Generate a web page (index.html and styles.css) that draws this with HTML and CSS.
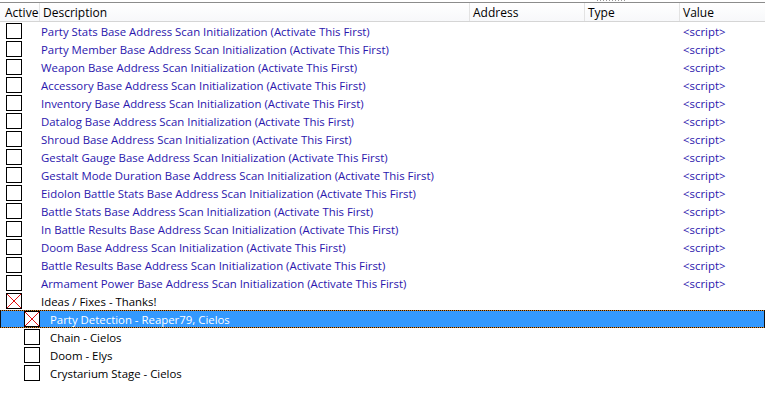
FILE: index.html
```html
<!DOCTYPE html>
<html>
<head>
<meta charset="utf-8">
<link rel="stylesheet" href="styles.css">
</head>
<body>
<div class="top"><span class="grip"></span></div>
<div class="list">
  <div class="head">
    <div class="hc c-active">Active</div>
    <div class="hc c-desc">Description</div>
    <div class="hc c-addr">Address</div>
    <div class="hc c-type">Type</div>
    <div class="hc c-val">Value</div>
  </div>
  <div class="rows">
    <div class="row script"><div class="d"><span class="box"></span><span class="t">Party Stats Base Address Scan Initialization (Activate This First)</span></div><div class="a"></div><div class="ty"></div><div class="v">&lt;script&gt;</div></div>
    <div class="row script"><div class="d"><span class="box"></span><span class="t">Party Member Base Address Scan Initialization (Activate This First)</span></div><div class="a"></div><div class="ty"></div><div class="v">&lt;script&gt;</div></div>
    <div class="row script"><div class="d"><span class="box"></span><span class="t">Weapon Base Address Scan Initialization (Activate This First)</span></div><div class="a"></div><div class="ty"></div><div class="v">&lt;script&gt;</div></div>
    <div class="row script"><div class="d"><span class="box"></span><span class="t">Accessory Base Address Scan Initialization (Activate This First)</span></div><div class="a"></div><div class="ty"></div><div class="v">&lt;script&gt;</div></div>
    <div class="row script"><div class="d"><span class="box"></span><span class="t">Inventory Base Address Scan Initialization (Activate This First)</span></div><div class="a"></div><div class="ty"></div><div class="v">&lt;script&gt;</div></div>
    <div class="row script"><div class="d"><span class="box"></span><span class="t">Datalog Base Address Scan Initialization (Activate This First)</span></div><div class="a"></div><div class="ty"></div><div class="v">&lt;script&gt;</div></div>
    <div class="row script"><div class="d"><span class="box"></span><span class="t">Shroud Base Address Scan Initialization (Activate This First)</span></div><div class="a"></div><div class="ty"></div><div class="v">&lt;script&gt;</div></div>
    <div class="row script"><div class="d"><span class="box"></span><span class="t">Gestalt Gauge Base Address Scan Initialization (Activate This First)</span></div><div class="a"></div><div class="ty"></div><div class="v">&lt;script&gt;</div></div>
    <div class="row script"><div class="d"><span class="box"></span><span class="t">Gestalt Mode Duration Base Address Scan Initialization (Activate This First)</span></div><div class="a"></div><div class="ty"></div><div class="v">&lt;script&gt;</div></div>
    <div class="row script"><div class="d"><span class="box"></span><span class="t">Eidolon Battle Stats Base Address Scan Initialization (Activate This First)</span></div><div class="a"></div><div class="ty"></div><div class="v">&lt;script&gt;</div></div>
    <div class="row script"><div class="d"><span class="box"></span><span class="t">Battle Stats Base Address Scan Initialization (Activate This First)</span></div><div class="a"></div><div class="ty"></div><div class="v">&lt;script&gt;</div></div>
    <div class="row script"><div class="d"><span class="box"></span><span class="t">In Battle Results Base Address Scan Initialization (Activate This First)</span></div><div class="a"></div><div class="ty"></div><div class="v">&lt;script&gt;</div></div>
    <div class="row script"><div class="d"><span class="box"></span><span class="t">Doom Base Address Scan Initialization (Activate This First)</span></div><div class="a"></div><div class="ty"></div><div class="v">&lt;script&gt;</div></div>
    <div class="row script"><div class="d"><span class="box"></span><span class="t">Battle Results Base Address Scan Initialization (Activate This First)</span></div><div class="a"></div><div class="ty"></div><div class="v">&lt;script&gt;</div></div>
    <div class="row script"><div class="d"><span class="box"></span><span class="t">Armament Power Base Address Scan Initialization (Activate This First)</span></div><div class="a"></div><div class="ty"></div><div class="v">&lt;script&gt;</div></div>
    <div class="row"><div class="d"><span class="box x"><svg viewBox="0 0 14 14" width="14" height="14"><path d="M0 0L14 14M14 0L0 14" stroke="#e01010" stroke-width="1"/></svg></span><span class="t">Ideas / Fixes - Thanks!</span></div><div class="a"></div><div class="ty"></div><div class="v"></div></div>
    <div class="row child sel"><div class="d"><span class="box x"><svg viewBox="0 0 14 14" width="14" height="14"><path d="M0 0L14 14M14 0L0 14" stroke="#e01010" stroke-width="1"/></svg></span><span class="t">Party Detection - Reaper79, Cielos</span></div><div class="a"></div><div class="ty"></div><div class="v"></div></div>
    <div class="row child"><div class="d"><span class="box"></span><span class="t">Chain - Cielos</span></div><div class="a"></div><div class="ty"></div><div class="v"></div></div>
    <div class="row child"><div class="d"><span class="box"></span><span class="t">Doom - Elys</span></div><div class="a"></div><div class="ty"></div><div class="v"></div></div>
    <div class="row child"><div class="d"><span class="box"></span><span class="t">Crystarium Stage - Cielos</span></div><div class="a"></div><div class="ty"></div><div class="v"></div></div>
  </div>
</div>
</body>
</html>
```
FILE: styles.css
```css
html, body {
  margin: 0;
  padding: 0;
  background: #fff;
  width: 765px;
  height: 406px;
  overflow: hidden;
}
body {
  font-family: "Open Sans", "Noto Sans", sans-serif;
  font-size: 11.4px;
  color: #000;
}
.top {
  height: 2px;
  border-bottom: 1px solid #8c8c8c;
  display: flex;
  justify-content: flex-start;
  padding-left: 597px;
}
.grip {
  width: 28px;
  height: 1px;
  margin-top: 0;
  background: repeating-linear-gradient(90deg, #9a9a9a 0 1px, transparent 1px 3px);
}
.head {
  display: grid;
  grid-template-columns: 40px 430px 115px 95px 1fr;
  height: 18px;
  border-bottom: 1px solid #d5d5d5;
  background: linear-gradient(#ffffff, #f7f8fa);
}
.hc {
  display: flex;
  align-items: center;
  padding-left: 3px;
  padding-top: 2px;
  border-right: 1px solid #e3e3e3;
  line-height: 16px;
  white-space: nowrap;
  font-size: 12px;
}
.c-active { padding-left: 5px; }
.c-val { border-right: none; }
.rows { display: flex; flex-direction: column; }
.row {
  display: grid;
  grid-template-columns: 470px 115px 95px 1fr;
  height: 18px;
  align-items: center;
  box-sizing: border-box;
}
.d {
  display: flex;
  align-items: center;
  white-space: nowrap;
}
.box {
  width: 16px;
  height: 16px;
  box-sizing: border-box;
  border: 1px solid #000;
  background: #fff;
  margin-left: 6px;
  display: flex;
}
.box svg { display: block; }
.t { margin-left: 19px; }
.child .box { margin-left: 24px; }
.child .t { margin-left: 10px; }
.script .t, .script .v { color: #2a16ad; }
.v { padding-left: 3px; white-space: nowrap; }
.sel {
  background: #3399ff;
  color: #fff;
  border: 1px solid transparent;
  border-image: repeating-linear-gradient(90deg, #111 0 1px, #e08a2a 1px 2px) 1;
}
.sel .d { margin-left: -1px; }
```
